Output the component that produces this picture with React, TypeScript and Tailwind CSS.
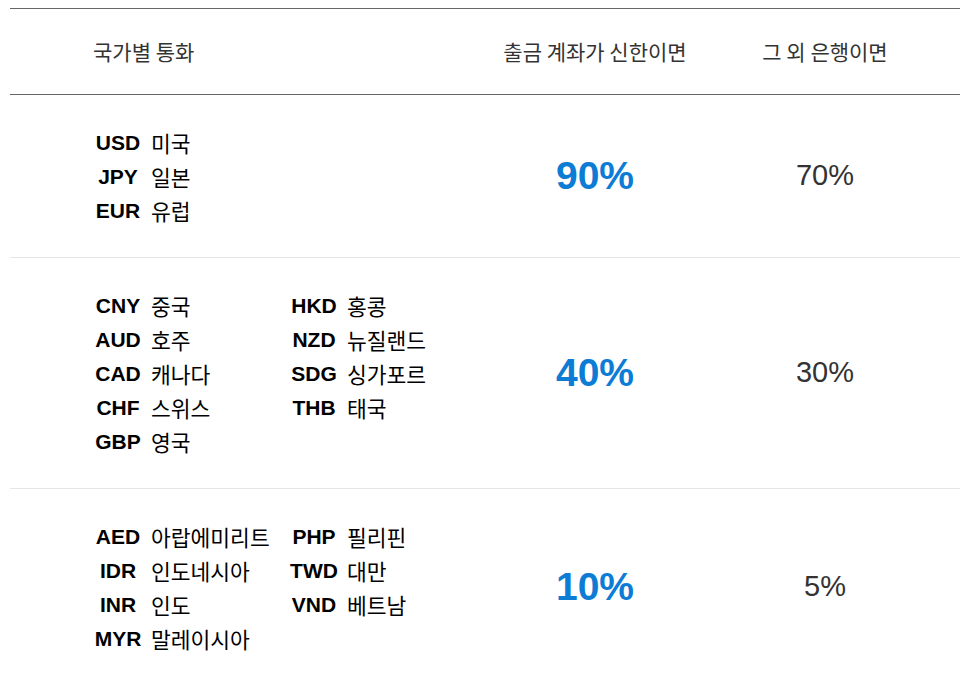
const rows = [
  {
    items: [
      ["USD", "미국"],
      ["JPY", "일본"],
      ["EUR", "유럽"],
    ],
    cols: 1,
    shinhan: "90%",
    other: "70%",
  },
  {
    items: [
      ["CNY", "중국"],
      ["HKD", "홍콩"],
      ["AUD", "호주"],
      ["NZD", "뉴질랜드"],
      ["CAD", "캐나다"],
      ["SDG", "싱가포르"],
      ["CHF", "스위스"],
      ["THB", "태국"],
      ["GBP", "영국"],
    ],
    cols: 2,
    shinhan: "40%",
    other: "30%",
  },
  {
    items: [
      ["AED", "아랍에미리트"],
      ["PHP", "필리핀"],
      ["IDR", "인도네시아"],
      ["TWD", "대만"],
      ["INR", "인도"],
      ["VND", "베트남"],
      ["MYR", "말레이시아"],
    ],
    cols: 2,
    shinhan: "10%",
    other: "5%",
  },
];

const kr = "font-['Noto_Sans_CJK_KR',sans-serif]";

export default function App() {
  return (
    <div className="bg-white w-[960px] h-[673px] overflow-hidden pt-2 pl-[10px]">
      {/* header */}
      <div
        className={`grid grid-cols-[470px_230px_230px_1fr] h-[87px] items-center border-t border-b border-[#666] text-[21px] text-[#333] ${kr}`}
      >
        <div className="pl-[83px]">국가별 통화</div>
        <div className="text-center">출금 계좌가 신한이면</div>
        <div className="text-center">그 외 은행이면</div>
        <div />
      </div>

      {rows.map((row, i) => (
        <div
          key={i}
          className="grid grid-cols-[470px_230px_230px_1fr] items-center border-b border-[#e6e6e6]"
        >
          <div className="pl-[83px] pt-[31px] pb-[29px]">
            <div className={row.cols === 2 ? "grid grid-cols-[196px_196px]" : "grid grid-cols-1"}>
              {row.items.map(([code, name]) => (
                <div key={code} className="flex items-center h-[34px] text-black">
                  <span className="w-[50px] text-center font-bold text-[21px] font-['Liberation_Sans',Arial,sans-serif]">
                    {code}
                  </span>
                  <span className={`ml-2 text-[21.5px] ${kr}`}>{name}</span>
                </div>
              ))}
            </div>
          </div>
          <div className="text-center font-bold text-[39px] text-[#0c7cd5] font-['Liberation_Sans',Arial,sans-serif]">
            {row.shinhan}
          </div>
          <div className="text-center text-[29px] text-[#333] font-['Liberation_Sans',Arial,sans-serif]">
            {row.other}
          </div>
          <div />
        </div>
      ))}
    </div>
  );
}
